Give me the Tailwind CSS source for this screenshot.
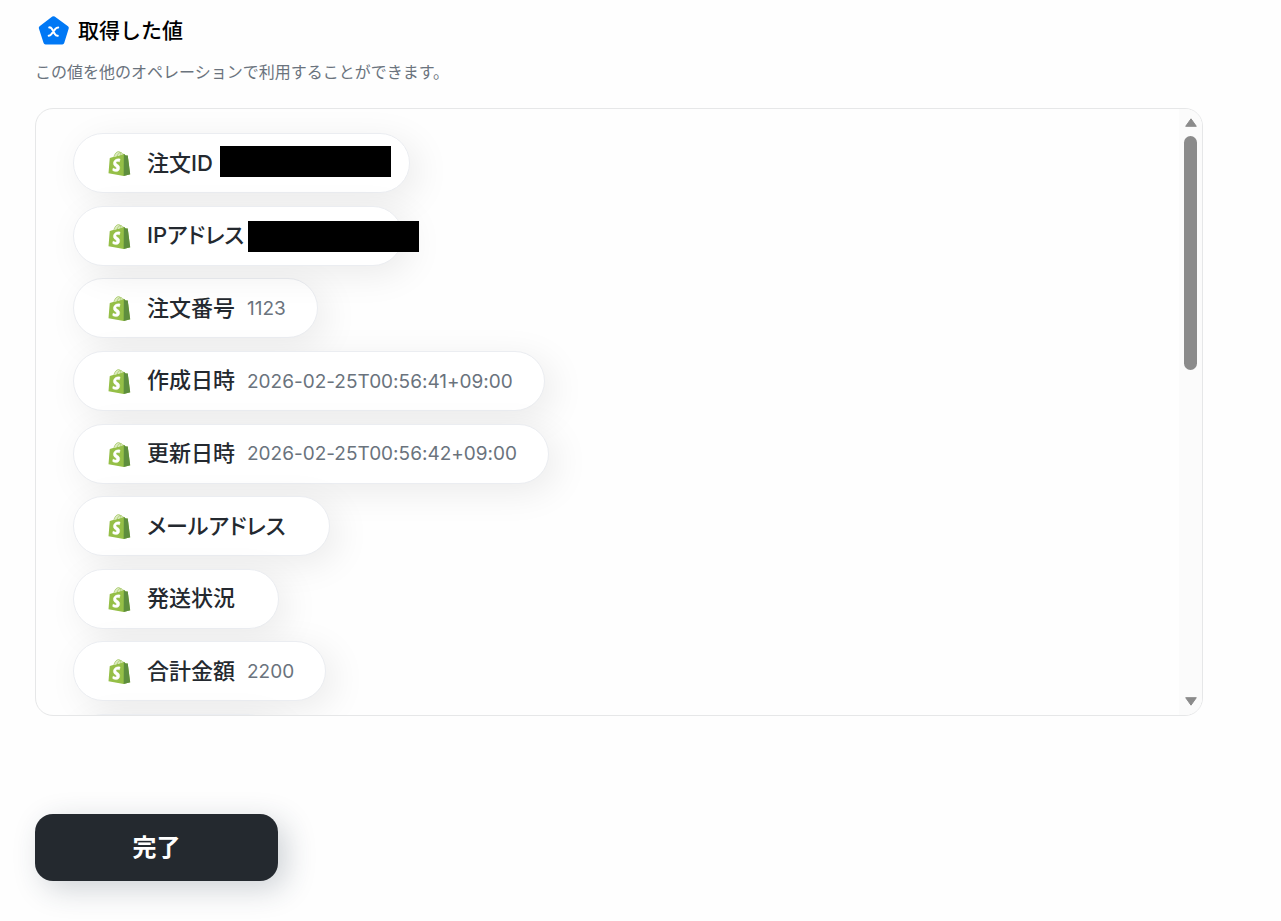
<!DOCTYPE html>
<html lang="ja">
<head>
<meta charset="utf-8">
<meta name="viewport" content="width=device-width, initial-scale=1">
<title>取得した値</title>
<script src="https://cdn.jsdelivr.net/npm/@tailwindcss/browser@4"></script>
</head>
<body class="bg-[#fefefe] font-['Inter','Noto_Sans_CJK_JP',sans-serif] text-[#24292f]">
<svg class="hidden" aria-hidden="true">
  <symbol id="bag" viewBox="0 0 109.5 124.5">
    <path fill="#95bf47" d="M95.9 23.9c-.1-.6-.6-1-1.100-1-.5 0-9.300-.2-9.300-.2s-7.400-7.200-8.100-7.900c-.7-.7-2.200-.5-2.700-.3 0 0-1.400.4-3.700 1.100L10 33c-3.500 1.100-3.600 1.200-4 4.500L0 111.200l75.600 13.100 32.800-8.100S96 24.500 95.900 23.900z"/>
    <path fill="#dcebc0" d="M27 30Q32 5 49 2q6-1 10 4 9 1 12 12Z"/>
    <path fill="none" stroke="#a9cb6b" stroke-width="4" d="M27 29C31 12 41 3 50 3s12 9 12 19M43 25C48 12 55 7 61 7s9 6 11 12"/>
    <path fill="#5e8e3e" d="M94.800 22.900c-.5 0-9.300-.2-9.300-.2s-7.400-7.200-8.100-7.900c-.3-.3-.6-.4-1-.5l-.800 110 32.800-8.100S96 24.500 95.900 23.900c-.1-.6-.6-1-1.100-1z"/>
    <path fill="#fff" stroke="#fff" stroke-width="2" d="M58 39.900l-3.800 14.400s-4.300-2-9.400-1.600c-7.500.5-7.500 5.200-7.500 6.400.4 6.400 17.300 7.800 18.300 22.900.7 11.900-6.300 20-16.400 20.600-12.200.8-18.900-6.400-18.900-6.400l2.600-11s6.700 5.100 12.100 4.700c3.500-.2 4.800-3.100 4.700-5.100-.5-8.400-14.300-7.900-15.200-21.700-.700-11.600 6.900-23.400 23.700-24.400 6.500-.5 9.800 1.200 9.800 1.200z"/>
  </symbol>
</svg>
<main class="pl-[35px] pr-[78px] pt-[15px]">
  <header>
    <h1 class="flex h-8 items-center gap-2 text-[21px] font-medium text-black">
      <svg class="ml-[3px] size-8" viewBox="0 0 32 32" aria-hidden="true">
        <path fill="#0078f5" stroke="#0078f5" stroke-width="4" stroke-linejoin="round" d="M15.500 3.200 28.800 12.800 24.300 27.500H7.500L2.800 12.800Z"/>
        <path fill="none" stroke="#fff" stroke-width="2" stroke-linecap="round" stroke-linejoin="round" d="M11.200 12.400q1.700-.2 2.600 1.300l3.200 5.600q1 1.700 2.800 1.500M20.200 12.400q-1.500 0-2.600 1.300l-4.400 5.600q-1.100 1.400-2.500 1.500"/>
      </svg>
      <span>取得した値</span>
    </h1>
    <p class="mt-[13px] text-base leading-6 text-[#6a737d]">この値を他のオペレーションで利用することができます。</p>
  </header>

  <section class="relative mt-6 h-[608px] overflow-hidden rounded-[18px] border border-[#e6e7e8]" aria-label="取得した値の一覧">
    <ul class="flex h-[641px] flex-col items-start justify-between [&>li]:flex [&>li]:h-[60px] [&>li]:items-center [&>li]:rounded-full [&>li]:border [&>li]:border-[#ebedf1] [&>li]:bg-white [&>li]:pl-[34px] [&>li]:pr-[31px] [&>li]:shadow-[8px_8px_36px_rgba(0,0,0,0.08)] ml-[37px] mt-6 text-[19px] text-[#6a737d] [font-feature-settings:'palt','calt'_0] [&_b]:mr-3 [&_b]:ml-4 [&_b]:text-[22px] [&_b]:font-medium [&_b]:text-[#24292f] [&_svg]:mt-px [&_svg]:h-[25px] [&_svg]:w-[23px] [&_i]:mt-0.5 [&_i]:not-italic">
      <li class="relative"><svg aria-hidden="true"><use href="#bag"/></svg><b>注文ID</b><span class="w-[153px]"></span><span class="absolute top-3 left-[146px] h-[31px] w-[171px] bg-black"></span></li>
      <li class="relative"><svg aria-hidden="true"><use href="#bag"/></svg><b>IPアドレス</b><span class="w-[115px]"></span><span class="absolute top-3.5 left-[174px] h-[31px] w-[171px] bg-black"></span></li>
      <li><svg aria-hidden="true"><use href="#bag"/></svg><b>注文番号</b><i>1123</i></li>
      <li><svg aria-hidden="true"><use href="#bag"/></svg><b>作成日時</b><i>2026-02-25T00:56:41+09:00</i></li>
      <li><svg aria-hidden="true"><use href="#bag"/></svg><b>更新日時</b><i>2026-02-25T00:56:42+09:00</i></li>
      <li><svg aria-hidden="true"><use href="#bag"/></svg><b>メールアドレス</b></li>
      <li><svg aria-hidden="true"><use href="#bag"/></svg><b>発送状況</b></li>
      <li><svg aria-hidden="true"><use href="#bag"/></svg><b>合計金額</b><i>2200</i></li>
      <li class="w-[205px]" aria-hidden="true"></li>
    </ul>
    <div class="absolute inset-y-0 right-0 flex w-[23px] flex-col items-center bg-[#fbfbfb] pt-[9px] pb-[9px]" aria-hidden="true">
      <svg class="h-[9px] w-3" viewBox="0 0 12 9"><path fill="#8b8b8b" stroke="#8b8b8b" stroke-linejoin="round" d="M6 .8 11.300 8.300H.7Z"/></svg>
      <div class="mt-[9px] h-[234px] w-[13px] rounded-full bg-[#8b8b8b]"></div>
      <svg class="mt-auto h-[9px] w-3" viewBox="0 0 12 9"><path fill="#8b8b8b" stroke="#8b8b8b" stroke-linejoin="round" d="M6 8.200.7.700h10.600Z"/></svg>
    </div>
  </section>

  <button type="button" class="mt-[98px] mb-10 block h-[67px] w-[243px] rounded-[18px] bg-[#24292f] text-2xl font-bold text-white shadow-[8px_8px_30px_rgba(36,55,75,0.22)]">完了</button>
</main>
</body>
</html>
